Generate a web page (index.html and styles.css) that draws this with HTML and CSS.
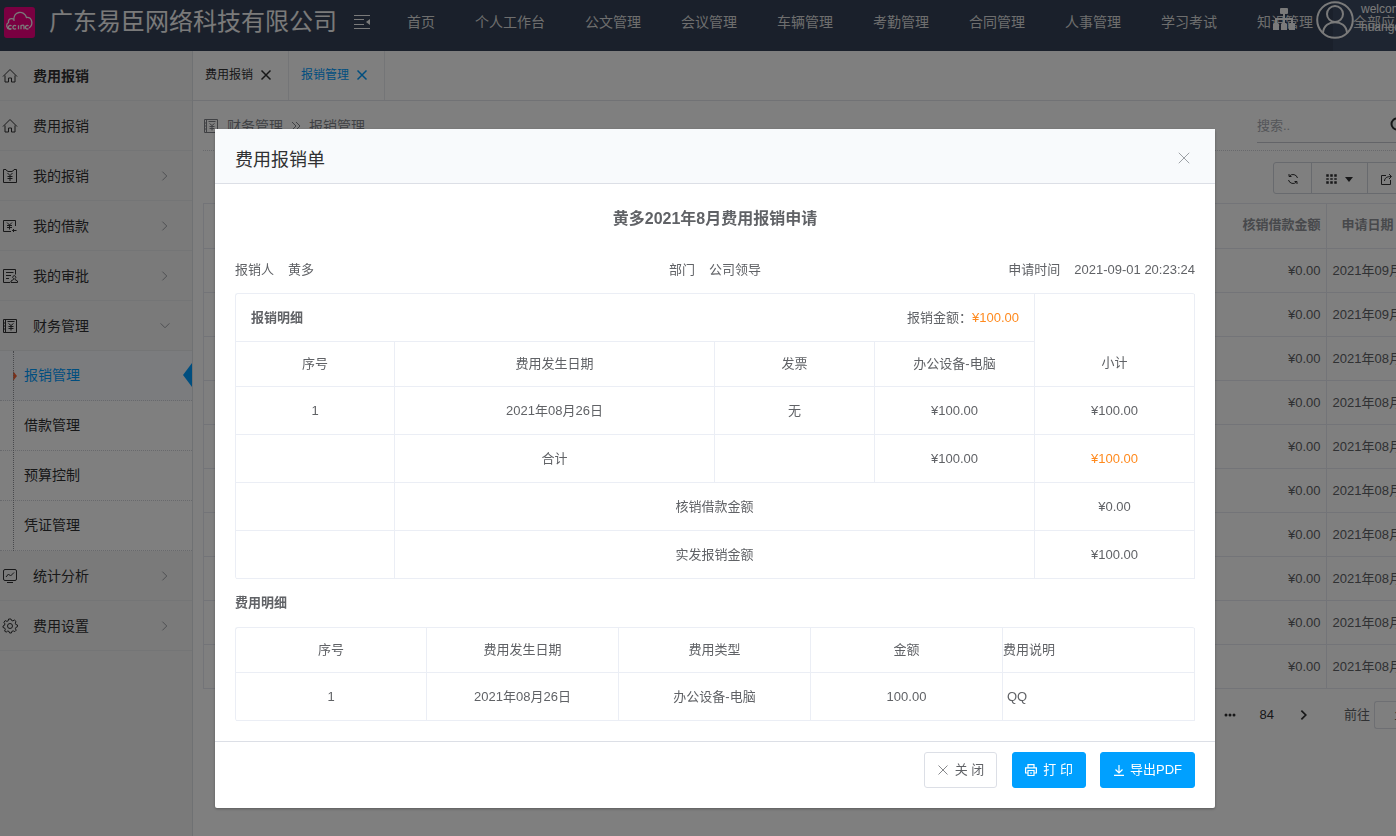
FILE: index.html
```html
<!DOCTYPE html>
<html lang="zh-CN">
<head>
<meta charset="utf-8">
<title>费用报销</title>
<link rel="stylesheet" href="styles.css">
</head>
<body>
<svg class="sprite" aria-hidden="true">
  <symbol id="home" viewBox="0 0 16 16"><path d="M1 8.500 8 1.500l7 7M3 7.500v6.500h3.500v-4h3v4H13V7.500"/></symbol>
  <symbol id="claim" viewBox="0 0 16 16"><path d="M4 1.500H1.500v13h13v-13H12M3.500 1.500l2.500 2h4l2.500-2M5.500 5 8 7.500 10.500 5M8 7.500V13M5.500 8.500h5M5.500 10.500h5"/></symbol>
  <symbol id="loan" viewBox="0 0 16 16"><path d="M13.500 8V2.500h-12v11H9M5 4.500 7.500 7 10 4.500M7.500 7v4.500M5 7.500h5M5 9.500h5M14.500 12.500h-4M12 11l-1.500 1.500L12 14"/></symbol>
  <symbol id="approve" viewBox="0 0 16 16"><path d="M13.500 6.500v-5h-12v13H8M4 4.500h7.500M4 7.500h5M4 10.500h3M9 14.500h6.500v-1.500l-2.500-1.500v-1a1.500 1.500 0 1 0-1.500 0v1L9 13z"/></symbol>
  <symbol id="finance" viewBox="0 0 16 16"><path d="M1.500 1.500h13v13h-13zM3.500 1.500v13M1 5h2M1 8h2M1 11h2M5.500 3.500h7M6.500 5.500l2.500 2 2.500-2M9 7.500v5M6.500 8.500h5M6.500 10.500h5"/></symbol>
  <symbol id="chart" viewBox="0 0 16 16"><rect x="1.500" y="1.500" width="13" height="11" rx="1.500"/><path d="m4 9 2.500-3 2 2L12 4.500M5 14.500h6"/></symbol>
  <symbol id="gear" viewBox="0 0 16 16"><circle cx="8" cy="8" r="2.500"/><path d="m6.600 1-.4 1.800-1.300.6-1.700-.8-1.300 1.700 1 1.500-.3 1.400L1 8v1.500l1.700.6.6 1.300-.7 1.700 1.600 1 1.400-1 1.400.3.600 1.600h1.800l.5-1.700 1.400-.4 1.500.7 1.400-1.400-.8-1.500.5-1.300 1.600-.7V7l-1.700-.5-.5-1.300.7-1.700L12.400 2l-1.500.9-1.300-.4L9 1z"/></symbol>
  <symbol id="right" viewBox="0 0 16 16"><path d="m5 3 5 5-5 5"/></symbol>
  <symbol id="down" viewBox="0 0 16 16"><path d="m3 5 5 5 5-5"/></symbol>
  <symbol id="cross" viewBox="0 0 16 16"><path d="m2 2 12 12M14 2 2 14"/></symbol>
</svg>

<div class="app">
  <header class="topbar">
    <svg class="logo" viewBox="0 0 32 32" aria-hidden="true"><rect x="1" y="1" width="31" height="31" rx="3"/><path d="M8 23H6.500a3.500 3.500 0 0 1-1-6.500C5 13 8.500 11.500 11 13.500M11 15C9.500 4.500 21.500 4 23.500 11.500c5.500-.5 7.500 7 2.500 10.500"/><path d="M8.500 20a1.800 1.800 0 1 0 0 2.500M13 20a1.800 1.800 0 1 0 0 2.500M15.500 19.200v4M18 23.200v-3.500q3-1.500 3 1v2.500M25.500 20a1.800 1.800 0 1 0 0 2.500"/></svg>
    <h1 class="brand">广东易臣网络科技有限公司</h1>
    <button class="fold" aria-label="收起菜单"><svg viewBox="0 0 16 16"><path d="M0 1.500h16M0 5.500h10M0 10.500h10M0 14.500h16"/><path class="solid" d="M16 5v6l-4-3z"/></svg></button>
    <nav class="nav">
      <a href="#">首页</a><a href="#">个人工作台</a><a href="#">公文管理</a><a href="#">会议管理</a><a href="#">车辆管理</a><a href="#">考勤管理</a><a href="#">合同管理</a><a href="#">人事管理</a><a href="#">学习考试</a><a href="#">知识管理</a><a href="#" class="on">全部应用</a>
    </nav>
    <div class="user">
      <svg class="sitemap" viewBox="0 0 24 24" aria-hidden="true"><path class="solid" d="M9 0h6q1 0 1 1v4q0 1-1 1H9q-1 0-1-1V1q0-1 1-1zM2 15h4l1 1v6H1v-6zM10 15h4l1 1v6H9v-6zM18 15h4l1 1v6h-6v-6z"/><path d="M12 6v9M4 15v-4h16v4"/></svg>
      <svg class="avatar" viewBox="0 0 38 38" aria-hidden="true"><circle cx="19" cy="19" r="17.800"/><circle cx="19" cy="13" r="8"/><path d="M7 32c1-14.500 23-14.500 24 0"/></svg>
      <div class="hello"><span>welcome</span><span>huangduo</span></div>
    </div>
  </header>

  <div class="body">
    <aside class="side">
      <div class="item head"><svg class="ico"><use href="#home"/></svg><span>费用报销</span></div>
      <a href="#" class="item"><svg class="ico"><use href="#home"/></svg><span>费用报销</span></a>
      <a href="#" class="item"><svg class="ico"><use href="#claim"/></svg><span>我的报销</span><svg class="arrow"><use href="#right"/></svg></a>
      <a href="#" class="item"><svg class="ico"><use href="#loan"/></svg><span>我的借款</span><svg class="arrow"><use href="#right"/></svg></a>
      <a href="#" class="item"><svg class="ico"><use href="#approve"/></svg><span>我的审批</span><svg class="arrow"><use href="#right"/></svg></a>
      <a href="#" class="item"><svg class="ico"><use href="#finance"/></svg><span>财务管理</span><svg class="arrow"><use href="#down"/></svg></a>
      <div class="sub">
        <a href="#" class="active">报销管理</a><a href="#">借款管理</a><a href="#">预算控制</a><a href="#">凭证管理</a>
      </div>
      <a href="#" class="item"><svg class="ico"><use href="#chart"/></svg><span>统计分析</span><svg class="arrow"><use href="#right"/></svg></a>
      <a href="#" class="item"><svg class="ico"><use href="#gear"/></svg><span>费用设置</span><svg class="arrow"><use href="#right"/></svg></a>
    </aside>

    <main class="main">
      <div class="tabs">
        <a href="#" class="tab">费用报销<svg><use href="#cross"/></svg></a>
        <a href="#" class="tab on">报销管理<svg><use href="#cross"/></svg></a>
      </div>
      <div class="panel">
        <div class="crumbs">
          <svg class="ico"><use href="#finance"/></svg><span>财务管理</span>
          <svg class="sep" viewBox="0 0 10 10"><path d="m1 1 4 4-4 4M5 1l4 4-4 4"/></svg><span>报销管理</span>
          <label class="search"><input type="text" placeholder="搜索.." aria-label="搜索"><svg viewBox="0 0 16 16"><circle cx="7" cy="7" r="5.500"/><path d="m11 11 4 4"/></svg></label>
        </div>
        <div class="tools">
          <button aria-label="刷新"><svg class="t-ico" viewBox="0 0 12 12"><path d="M1.500 7A4.700 4.700 0 0 0 9.500 9M10.500 5A4.700 4.700 0 0 0 2.500 3M2 1v2.500h2.500M10 11V8.500H7.500"/></svg></button>
          <button class="wide" aria-label="列"><svg class="t-ico grid" viewBox="0 0 12 12"><path d="M1 1h3v3H1zM5 1h3v3H5zM9 1h3v3H9zM1 5h3v2H1zM5 5h3v2H5zM9 5h3v2H9zM1 8h3v3H1zM5 8h3v3H5zM9 8h3v3H9z"/></svg><i class="caret"></i></button>
          <button aria-label="导出"><svg class="t-ico" viewBox="0 0 12 12"><path d="M6 2.500H1.500v9h9V7M4.500 8C4.500 5 7 3.500 11 3.500M9 1l2.500 2.500L9 6"/></svg></button>
        </div>
        <table class="list">
          <colgroup><col><col class="c-money"><col class="c-date"></colgroup>
          <thead><tr><th></th><th>核销借款金额</th><th class="date">申请日期</th></tr></thead>
          <tbody>
            <tr><td></td><td>¥0.00</td><td class="date">2021年09月01日</td></tr>
            <tr><td></td><td>¥0.00</td><td class="date">2021年09月01日</td></tr>
            <tr><td></td><td>¥0.00</td><td class="date">2021年08月31日</td></tr>
            <tr><td></td><td>¥0.00</td><td class="date">2021年08月31日</td></tr>
            <tr><td></td><td>¥0.00</td><td class="date">2021年08月31日</td></tr>
            <tr><td></td><td>¥0.00</td><td class="date">2021年08月31日</td></tr>
            <tr><td></td><td>¥0.00</td><td class="date">2021年08月31日</td></tr>
            <tr><td></td><td>¥0.00</td><td class="date">2021年08月31日</td></tr>
            <tr><td></td><td>¥0.00</td><td class="date">2021年08月31日</td></tr>
            <tr><td></td><td>¥0.00</td><td class="date">2021年08月31日</td></tr>
          </tbody>
        </table>
        <div class="pager">
          <svg class="dots" viewBox="0 0 12 4"><circle cx="2" cy="2" r="1.500"/><circle cx="6" cy="2" r="1.500"/><circle cx="10" cy="2" r="1.500"/></svg>
          <a href="#">84</a>
          <svg class="next"><use href="#right"/></svg>
          <label>前往<input type="text" value="1" aria-label="页码"></label>
        </div>
      </div>
    </main>
  </div>
</div>

<div class="mask">
  <section class="dialog" role="dialog" aria-labelledby="dlg-title">
    <header class="dlg-head">
      <h2 id="dlg-title">费用报销单</h2>
      <button class="close" aria-label="关闭"><svg><use href="#cross"/></svg></button>
    </header>
    <div class="dlg-body">
      <h3>黄多2021年8月费用报销申请</h3>
      <div class="meta">
        <div><span>报销人</span><span>黄多</span></div>
        <div><span>部门</span><span>公司领导</span></div>
        <div><span>申请时间</span><span>2021-09-01 20:23:24</span></div>
      </div>
      <table class="sheet">
        <colgroup><col class="w1"><col class="w2"><col class="w3"><col class="w3"><col></colgroup>
        <tbody>
          <tr><td colspan="4"><div class="sum"><b>报销明细</b><span>报销金额：<em>¥100.00</em></span></div></td><td rowspan="2" class="total">小计</td></tr>
          <tr class="low"><td>序号</td><td>费用发生日期</td><td>发票</td><td>办公设备-电脑</td></tr>
          <tr><td>1</td><td>2021年08月26日</td><td>无</td><td>¥100.00</td><td>¥100.00</td></tr>
          <tr><td></td><td>合计</td><td></td><td>¥100.00</td><td><em>¥100.00</em></td></tr>
          <tr><td></td><td colspan="3">核销借款金额</td><td>¥0.00</td></tr>
          <tr><td></td><td colspan="3">实发报销金额</td><td>¥100.00</td></tr>
        </tbody>
      </table>
      <h4>费用明细</h4>
      <table class="sheet">
        <colgroup><col class="w4"><col><col><col><col></colgroup>
        <thead><tr class="low"><th>序号</th><th>费用发生日期</th><th>费用类型</th><th>金额</th><th class="note">费用说明</th></tr></thead>
        <tbody><tr><td>1</td><td>2021年08月26日</td><td>办公设备-电脑</td><td>100.00</td><td class="note text">QQ</td></tr></tbody>
      </table>
    </div>
    <footer class="dlg-foot">
      <button class="btn plain"><svg><use href="#cross"/></svg>关 闭</button>
      <button class="btn primary"><svg viewBox="0 0 12 12"><path d="M3 4V.6h6V4M3 9H.6V3.800h10.800V9H9M3 6.500h6v5H3zM5 9h2"/></svg>打 印</button>
      <button class="btn primary"><svg viewBox="0 0 12 12"><path d="M6 1v7.500M2.500 5.500 6 9l3.500-3.500M1 11.300h10"/></svg>导出PDF</button>
    </footer>
  </section>
</div>
</body>
</html>
```
FILE: styles.css
```css
* { box-sizing: border-box; }
body {
  margin: 0;
  font: 13px/20px "Liberation Sans", "Noto Sans CJK SC", sans-serif;
  color: #606266;
  overflow: hidden;
}
a { color: inherit; text-decoration: none; }
button, input { font: inherit; color: inherit; margin: 0; }
svg { display: block; flex: none; fill: none; stroke: currentColor; stroke-width: 1; }
.solid { fill: currentColor; stroke: none; }
.sprite { display: none; }
h1, h2, h3, h4 { margin: 0; font-weight: 400; }
em { font-style: normal; color: #ff8a1e; }

.app { isolation: isolate; display: flex; flex-direction: column; min-height: 100vh; }
.body { display: flex; flex: 1; }

/* top bar */
.topbar {
  position: relative;
  display: flex;
  align-items: center;
  height: 51px;
  padding: 0 0 7px 3px;
  overflow: hidden;
  background: #344156;
  color: #f4f4f4;
}
.logo { width: 32px; height: 32px; stroke-width: 1.3; }
.logo rect { fill: #f50082; stroke: none; }
.brand { margin-left: 14px; font-size: 24px; line-height: 36px; white-space: nowrap; }
.fold { margin-left: 17px; padding: 0; border: 0; background: none; }
.fold svg { width: 16px; height: 16px; }
.nav { display: flex; align-self: flex-start; margin-left: 17px; font-size: 14px; color: #dcdcdc; }
.nav a { padding: 0 20px; height: 51px; line-height: 44px; white-space: nowrap; }
.nav .on { background: #3d4b62; }
.user { position: absolute; top: 0; left: calc(100% - 124px); display: flex; align-items: flex-start; }
.sitemap { width: 24px; height: 24px; margin: 8px 20px 0 0; stroke-width: 2; }
.avatar { width: 38px; height: 38px; margin-top: 1px; stroke-width: 2; }
.hello { display: flex; flex-direction: column; margin-left: 7px; font-size: 12px; line-height: 18px; }

/* side menu */
.side { width: 193px; flex: none; background: #f4f4f4; border-right: 1px solid #dfe2e6; color: #303133; font-size: 14px; }
.item { display: flex; align-items: center; height: 50px; padding: 0 20px 0 2px; border-bottom: 1px solid #e9eaec; }
.item span { flex: 1; margin-left: 15px; }
.head { font-weight: 700; }
.ico { width: 16px; height: 16px; }
.arrow { width: 14px; height: 14px; color: #909399; }
.sub { position: relative; background: #fff; }
.sub::before { content: ""; position: absolute; z-index: 1; left: 13px; top: 0; bottom: 0; border-left: 1px dotted #909399; }
.sub a { position: relative; display: block; height: 50px; line-height: 48px; padding-left: 24px; border-bottom: 1px dotted #d0d2d8; }
.sub .active { background: #f7f8fc; color: #009dff; }
.sub .active::before { content: ""; position: absolute; left: 13px; top: 20px; border: solid transparent; border-width: 5px 0 5px 4px; border-left-color: #f56033; }
.sub .active::after { content: ""; position: absolute; right: 0; top: 12px; border: solid transparent; border-width: 12px 9px 12px 0; border-right-color: #009dff; }

/* content */
.main { flex: 1; min-width: 0; background: #fff; overflow: hidden; }
.tabs { display: flex; height: 50px; border-bottom: 1px solid #e2e5ea; font-size: 12px; color: #303133; }
.tab { display: flex; align-items: center; gap: 7px; padding: 0 16px 2px 12px; border-right: 1px solid #e9ebef; }
.tab svg { width: 12px; height: 12px; stroke-width: 2; }
.tab.on { color: #009dff; }
.panel { padding-left: 10px; }
.crumbs { display: flex; align-items: center; height: 50px; border-bottom: 1px dotted #d0d3d9; font-size: 14px; color: #808389; }
.crumbs span { margin-left: 8px; }
.sep { width: 10px; height: 10px; margin-left: 8px; }
.search { display: flex; align-items: center; width: 139px; height: 34px; margin-left: auto; overflow: hidden; border-bottom: 1px solid #c6c9d0; }
.search input { width: 133px; flex: none; border: 0; padding: 2px 0 0; font-size: 13px; outline: 0; background: none; }
.search input::placeholder { color: #a8abb2; }
.search svg { width: 16px; height: 16px; stroke-width: 2; color: #303133; }
.tools { display: flex; justify-content: flex-end; height: 52px; padding-top: 11px; color: #303133; }
.tools button { display: flex; align-items: center; justify-content: center; gap: 8px; width: 39px; height: 32px; padding: 2px 0 0; margin-left: -1px; border: 1px solid #d0d4dc; background: none; }
.tools button:first-child { border-radius: 3px 0 0 3px; }
.tools .wide { width: 57px; padding-right: 2px; }
.tools button:last-child { width: 29px; border-right: 0; padding-left: 8px; }
.t-ico { width: 12px; height: 12px; }
.grid { fill: currentColor; stroke: #fff; stroke-width: .5; }
.caret { border: solid transparent; border-width: 5px 4px 0; border-top-color: currentColor; }
.list { width: 100%; table-layout: fixed; border-collapse: collapse; }
.list th, .list td { height: 44px; padding: 0 5px; border: 1px solid #e6e9f0; text-align: right; white-space: nowrap; overflow: hidden; }
.list th { height: 45px; padding-bottom: 2px; color: #909399; }
.list tr > :first-child { border-right: 0; }
.list tr > :nth-child(2) { border-left: 0; }
.list .date { text-align: left; border-right: 0; padding-left: 6px; }
.list th.date { padding-left: 15px; }
.c-money { width: 112px; }
.c-date { width: 70px; }
.pager { display: flex; align-items: center; justify-content: flex-end; height: 52px; color: #303133; overflow: hidden; }
.pager .dots { width: 12px; height: 4px; fill: currentColor; stroke: none; }
.pager a { margin-left: 24px; }
.pager .next { width: 14px; height: 14px; margin-left: 23px; stroke-width: 2; }
.pager label { display: flex; align-items: center; gap: 4px; margin-left: 33px; color: #606266; }
.pager input { width: 22px; height: 28px; padding: 0 0 0 19px; border: 1px solid #dcdfe6; border-right: 0; border-radius: 3px 0 0 3px; background: #fff; }

/* dialog */
.mask { position: fixed; inset: 0; display: flex; align-items: flex-start; justify-content: center; padding-top: 129px; background: rgba(0, 0, 0, .5); }
.dialog { width: 1000px; max-width: 100%; margin-left: 34px; background: #fff; border-radius: 2px; box-shadow: 0 1px 3px rgba(0, 0, 0, .3); }
.dlg-head { display: flex; justify-content: space-between; align-items: center; height: 55px; padding: 8px 24px 0 20px; background: #f8fafc; border-bottom: 1px solid #dcdfe6; }
.dlg-head h2 { font-size: 18px; line-height: 28px; color: #303133; }
.close { padding: 0 0 4px; border: 0; background: none; color: #909399; }
.close svg { width: 14px; height: 14px; }
.dlg-body { padding: 21px 20px 20px; }
.dlg-body h3 { font-size: 16px; line-height: 28px; font-weight: 700; text-align: center; }
.meta { display: grid; grid-template-columns: repeat(3, 1fr); padding: 27px 0 13px; }
.meta div { display: flex; gap: 14px; }
.meta div:nth-child(2) { justify-content: center; }
.meta div:nth-child(3) { justify-content: flex-end; }
.sheet { width: 100%; table-layout: fixed; border-collapse: separate; border-spacing: 0; border: 1px solid #ebeef5; border-width: 1px 0 0 1px; border-radius: 3px; }
.sheet td, .sheet th { height: 48px; padding: 0; border: 1px solid #ebeef5; border-width: 0 1px 1px 0; text-align: center; font-weight: 400; }
.sheet .low > * { height: 45px; padding-bottom: 1px; }
.sheet .total { padding-top: 46px; }
.sheet .note { text-align: left; }
.sheet .text { padding-left: 4px; }
.w1 { width: 159px; }
.w2 { width: 320px; }
.w3 { width: 160px; }
.w4 { width: 191px; }
.sum { display: flex; justify-content: space-between; padding: 0 15px; }
h4 { padding: 14px 0; font-weight: 700; }
.dlg-foot { display: flex; justify-content: flex-end; gap: 14px; padding: 10px 20px 20px; border-top: 1px solid #dcdfe6; }
.btn { display: flex; align-items: center; gap: 6px; height: 36px; padding: 0 12px; border: 1px solid #dcdfe6; border-radius: 3px; background: #fff; font-size: 13px; }
.btn svg { width: 12px; height: 12px; }
.plain { margin-right: 1px; }
.primary { background: #00a0ff; border-color: #00a0ff; color: #fff; }
.primary svg { stroke-width: 1.2; }
.primary:last-child { gap: 5px; }
```
